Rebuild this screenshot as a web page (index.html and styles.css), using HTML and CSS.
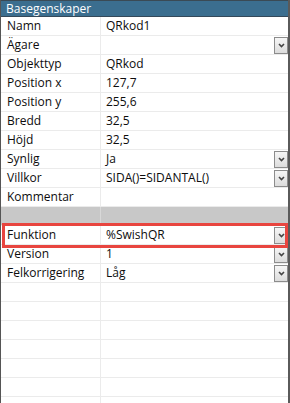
FILE: index.html
```html
<!DOCTYPE html>
<html lang="sv">

<head>
    <meta charset="utf-8">
    <title>Basegenskaper</title>
    <link rel="stylesheet" href="styles.css">
</head>

<body>
    <section class="panel">
        <header class="panel-head">Basegenskaper</header>

        <div class="rad"><div class="navn">Namn</div><div class="vaerdi">QRkod1</div></div>
        <div class="rad"><div class="navn">Ägare</div><div class="vaerdi"><span class="tekst"></span><span class="knap"></span></div></div>
        <div class="rad"><div class="navn">Objekttyp</div><div class="vaerdi">QRkod</div></div>
        <div class="rad"><div class="navn">Position x</div><div class="vaerdi">127,7</div></div>
        <div class="rad"><div class="navn">Position y</div><div class="vaerdi">255,6</div></div>
        <div class="rad"><div class="navn">Bredd</div><div class="vaerdi">32,5</div></div>
        <div class="rad"><div class="navn">Höjd</div><div class="vaerdi">32,5</div></div>
        <div class="rad"><div class="navn">Synlig</div><div class="vaerdi"><span class="tekst">Ja</span><span class="knap"></span></div></div>
        <div class="rad"><div class="navn">Villkor</div><div class="vaerdi"><span class="tekst">SIDA()=SIDANTAL()</span><span class="knap"></span></div></div>
        <div class="rad"><div class="navn">Kommentar</div><div class="vaerdi"></div></div>
        <div class="rad graa"><div class="navn"></div><div class="vaerdi"></div></div>
        <div class="rad"><div class="navn">Funktion</div><div class="vaerdi"><span class="tekst">%SwishQR</span><span class="knap"></span></div></div>
        <div class="rad"><div class="navn">Version</div><div class="vaerdi"><span class="tekst">1</span><span class="knap"></span></div></div>
        <div class="rad"><div class="navn">Felkorrigering</div><div class="vaerdi"><span class="tekst">Låg</span><span class="knap"></span></div></div>
        <div class="rad"><div class="navn"></div><div class="vaerdi"></div></div>
        <div class="rad"><div class="navn"></div><div class="vaerdi"></div></div>
        <div class="rad"><div class="navn"></div><div class="vaerdi"></div></div>
        <div class="rad"><div class="navn"></div><div class="vaerdi"></div></div>
        <div class="rad"><div class="navn"></div><div class="vaerdi"></div></div>
        <div class="rad"><div class="navn"></div><div class="vaerdi"></div></div>
        <div class="rad"><div class="navn"></div><div class="vaerdi"></div></div>

        <!-- markering rundt om Funktion -->
        <div class="markering"></div>
    </section>
</body>

</html>
```

FILE: styles.css
```css
body {
    margin: 0;
    background-color: white;
    font-family: "Open Sans", "Noto Sans", sans-serif;
    font-size: 12px;
    color: #0d0d0d;
}

.panel {
    position: relative;
    width: 290px;
    height: 403px;
    box-sizing: border-box;
    border-left: 1px solid #555;
    border-right: 2px solid #5a5a5a;
    overflow: hidden;
}

.panel-head {
    height: 15px;
    line-height: 15px;
    border-top: 1px solid #3a4a55;
    border-bottom: 1px solid #34495a;
    background-color: #3b6e8f;
    color: white;
    padding-left: 5px;
}

.rad {
    display: flex;
    height: 18px;
    border-bottom: 1px solid #ebebeb;
}

.navn {
    width: 100px;
    flex-shrink: 0;
    border-right: 1px solid #ebebeb;
    padding-left: 6px;
    box-sizing: border-box;
    line-height: 18px;
    white-space: nowrap;
}

.vaerdi {
    flex: 1;
    display: flex;
    align-items: center;
    padding-left: 5px;
    line-height: 18px;
    white-space: nowrap;
}

.tekst {
    flex: 1;
}

.knap {
    width: 12px;
    height: 15px;
    margin-top: 1px;
    align-self: flex-start;
    border: 1px solid #8c8c8c;
    background-image: url("data:image/svg+xml,%3Csvg xmlns='http://www.w3.org/2000/svg' width='7' height='5'%3E%3Cpath d='M1 1 L3.5 3.5 L6 1' fill='none' stroke='%23444' stroke-width='1.6'/%3E%3C/svg%3E"), linear-gradient(#f6f6f6, #dcdcdc);
    background-repeat: no-repeat;
    background-position: center;
}

.graa {
    background-color: #c8c8c8;
}

.graa .navn {
    border-right-color: #d8d8d8;
}

.markering {
    position: absolute;
    top: 223px;
    left: 1px;
    width: 286px;
    height: 25px;
    box-sizing: border-box;
    border: 3px solid #e8453f;
}
```
